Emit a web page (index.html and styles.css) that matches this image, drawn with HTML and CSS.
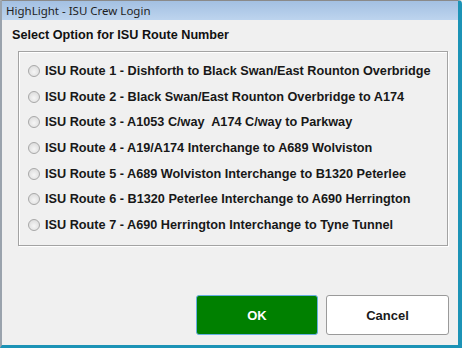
FILE: index.html
```html
<!DOCTYPE html>
<html lang="en">
<head>
    <meta charset="UTF-8">
    <title>HighLight - ISU Crew Login</title>
    <link rel="stylesheet" href="styles.css">
</head>
<body>
    <div class="window">
        <div class="titlebar">HighLight - ISU Crew Login</div>
        <div class="client">
            <h2 class="heading">Select Option for ISU Route Number</h2>
            <div class="group">
                <label class="option"><span class="radio"></span>ISU Route 1 - Dishforth to Black Swan/East Rounton Overbridge</label>
                <label class="option"><span class="radio"></span>ISU Route 2 - Black Swan/East Rounton Overbridge to A174</label>
                <label class="option"><span class="radio"></span>ISU Route 3 - A1053 C/way&nbsp; A174 C/way to Parkway</label>
                <label class="option"><span class="radio"></span>ISU Route 4 - A19/A174 Interchange to A689 Wolviston</label>
                <label class="option"><span class="radio"></span>ISU Route 5 - A689 Wolviston Interchange to B1320 Peterlee</label>
                <label class="option"><span class="radio"></span>ISU Route 6 - B1320 Peterlee Interchange to A690 Herrington</label>
                <label class="option"><span class="radio"></span>ISU Route 7 - A690 Herrington Interchange to Tyne Tunnel</label>
            </div>
            <div class="buttons">
                <button class="btn btn-ok">OK</button>
                <button class="btn btn-cancel">Cancel</button>
            </div>
        </div>
    </div>
</body>
</html>
```

FILE: styles.css
```css
body {
    margin: 0;
    padding: 0;
    font-family: "Liberation Sans", Arial, sans-serif;
    background: #f0f0f0;
}
.window {
    width: 462px;
    height: 348px;
    box-sizing: border-box;
    border-top: 1px solid #8a8a8a;
    border-left: 2px solid #9aa3ad;
    border-right: 4px solid #1c93b6;
    border-bottom: 3px solid #1c93b6;
    border-top-right-radius: 4px;
    display: flex;
    flex-direction: column;
    background: #f0f0f0;
}
.titlebar {
    height: 19px;
    line-height: 19px;
    padding-left: 4px;
    font-family: "Noto Sans", "Open Sans", sans-serif;
    font-size: 11.5px;
    color: #1e1e1e;
    background: linear-gradient(#a3c0e2, #bdd4ee);
}
.client {
    flex: 1;
    display: flex;
    flex-direction: column;
}
.heading {
    margin: 7px 0 0 10px;
    font-size: 12.65px;
    line-height: 16px;
    font-weight: bold;
    color: #111;
}
.group {
    margin: 8px 10px 0 16px;
    height: 195px;
    box-sizing: border-box;
    padding: 6px 0 0 9px;
    border: 1px solid #a3a3a3;
    box-shadow: inset 1px 1px 0 #ffffff, 1px 1px 0 #ffffff;
}
.option {
    display: flex;
    align-items: center;
    height: 25.7px;
    font-size: 12.7px;
    font-weight: bold;
    color: #181818;
}
.radio {
    width: 10px;
    height: 10px;
    margin-right: 5px;
    border-radius: 50%;
    border: 1px solid #a8a8a8;
    background: radial-gradient(circle at 50% 60%, #f6f6f6, #d6d6d6);
}
.buttons {
    display: flex;
    justify-content: flex-end;
    gap: 8px;
    margin: 49px 9px 0 0;
}
.btn {
    width: 123px;
    height: 40px;
    font-family: "Liberation Sans", Arial, sans-serif;
    font-size: 13px;
    font-weight: bold;
    border-radius: 3px;
    cursor: pointer;
}
.btn-ok {
    width: 122px;
    background: #008000;
    color: #ffffff;
    border: 1px solid #66aee0;
}
.btn-cancel {
    background: #ffffff;
    color: #1a1a1a;
    border: 1px solid #9a9a9a;
}
```
